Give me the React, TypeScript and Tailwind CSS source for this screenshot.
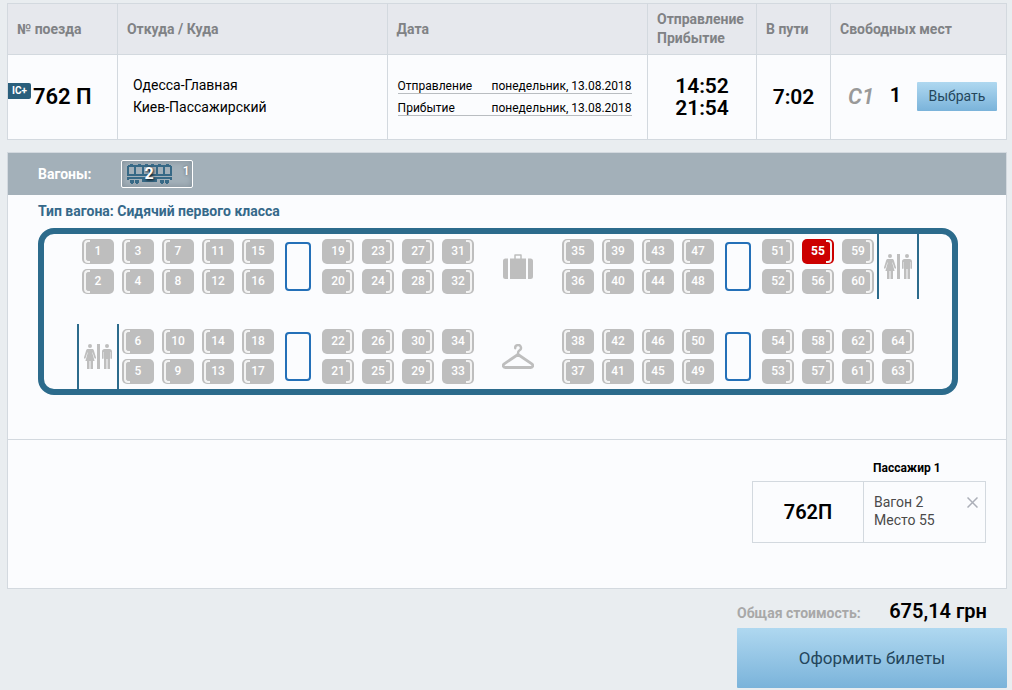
import React, { useState } from "react";
import clsx from "clsx";

type Facing = "left" | "right";

type Column =
  | { kind: "seats"; facing: Facing; seats: [number, number] }
  | { kind: "table" }
  | { kind: "wc" }
  | { kind: "luggage" }
  | { kind: "hanger" };

const seats = (facing: Facing, pairs: [number, number][]): Column[] =>
  pairs.map((pair) => ({ kind: "seats", facing, seats: pair }));

const upperSide: Column[] = [
  ...seats("left", [[1, 2], [3, 4], [7, 8], [11, 12], [15, 16]]),
  { kind: "table" },
  ...seats("right", [[19, 20], [23, 24], [27, 28], [31, 32]]),
  { kind: "luggage" },
  ...seats("left", [[35, 36], [39, 40], [43, 44], [47, 48]]),
  { kind: "table" },
  ...seats("right", [[51, 52], [55, 56], [59, 60]]),
  { kind: "wc" },
];

const lowerSide: Column[] = [
  { kind: "wc" },
  ...seats("left", [[6, 5], [10, 9], [14, 13], [18, 17]]),
  { kind: "table" },
  ...seats("right", [[22, 21], [26, 25], [30, 29], [34, 33]]),
  { kind: "hanger" },
  ...seats("left", [[38, 37], [42, 41], [46, 45], [50, 49]]),
  { kind: "table" },
  ...seats("right", [[54, 53], [58, 57], [62, 61], [64, 63]]),
];

const FREE_SEAT = 55;

function WagonIcon() {
  return (
    <svg width="45" height="20" viewBox="0 0 45 20" fill="#376986" shapeRendering="crispEdges">
      {/* roof vents */}
      <path d="M3 0h3v1H3zM11 0h3v1h-3zM18 0h3v1h-3zM24 0h3v1h-3zM31 0h3v1h-3zM39 0h3v1h-3z" />
      {/* body with windows cut out */}
      <path
        fillRule="evenodd"
        d="M1 1h43v1h1v10H0V2h1zM2 3v7h5V3zM9 3v7h6V3zM17 3v7h5V3zM24 3v7h5V3zM31 3v7h5V3zM38 3v7h5V3z"
      />
      {/* frame and wheels */}
      <path d="M0 13h45v3h-2v-1H30v3H15v-3H2v1H0z" />
      <path d="M3 16h4v3H6v1H4v-1H3zM8 16h4v3h-1v1H9v-1H8zM33 16h4v3h-1v1h-2v-1h-1zM38 16h4v3h-1v1h-2v-1h-1z" />
    </svg>
  );
}

function WcIcon() {
  return (
    <svg width="28" height="25" viewBox="0 0 28 25" fill="#bebebe">
      <circle cx="6" cy="2" r="2" />
      <path d="M4 5h4c1 0 1.500.4 1.800 1.200L12 13.500c.2 1.200-1.200 1.600-1.600.5L8.600 8.500H8.200L10.600 17H9v8H6.500v-8h-1v8H3v-8H1.400l2.400-8.500h-.4L1.600 14c-.4 1.100-1.800.7-1.600-.5l2.200-7.300C2.500 5.400 3 5 4 5z" />
      <path d="M13 0h3v25h-3z" />
      <circle cx="23" cy="2" r="2" />
      <path d="M20.500 5h5C27 5 28 6 28 7.500V14c0 1.200-1.600 1.200-1.600 0V8H26v17h-2.500V15h-1v10H20V8h-.4v6c0 1.200-1.600 1.200-1.600 0V7.500C18 6 19 5 20.500 5z" />
    </svg>
  );
}

function LuggageIcon() {
  return (
    <svg width="30" height="25" viewBox="0 0 30 25" fill="#bebebe">
      <path d="M12 5V1h6v4" fill="none" stroke="#bebebe" strokeWidth="1.500" strokeLinejoin="round" />
      <path d="M2.500 4.500H5V25H2.500A2.500 2.500 0 0 1 0 22.500V7a2.500 2.500 0 0 1 2.500-2.500zM7 4.500h16V25H7zM25 4.500h2.500A2.500 2.500 0 0 1 30 7v15.500a2.500 2.500 0 0 1-2.500 2.500H25z" />
    </svg>
  );
}

function HangerIcon() {
  return (
    <svg width="32" height="25" viewBox="0 0 32 25" fill="none" stroke="#bebebe" strokeLinecap="round" strokeLinejoin="round">
      <path d="M13.200 4.200A2.900 2.900 0 1 1 17.200 6.600C16.200 7.100 16 7.700 16 9.500" strokeWidth="2.400" />
      <path d="M16 10.500 2.200 19.800C.6 21 1 23.500 3.200 23.500h25.600c2.200 0 2.600-2.500 1-3.700z" strokeWidth="2.800" />
    </svg>
  );
}

function Seat({
  number,
  facing,
  selected,
  onClick,
}: {
  number: number;
  facing: Facing;
  selected: boolean;
  onClick: () => void;
}) {
  return (
    <button
      type="button"
      disabled={number !== FREE_SEAT}
      onClick={onClick}
      className={clsx(
        "relative h-[25px] w-8 rounded-[5px] pb-0.5 text-center text-xs leading-5 text-white",
        selected ? "bg-[#cc0000] font-bold" : "bg-[#bebebe] font-medium"
      )}
    >
      <span
        className={clsx(
          "absolute inset-y-px w-1.5 border-y-2 border-[#f3f3f3]",
          facing === "left" ? "left-0.5 rounded-l-[4px] border-l-2" : "right-0.5 rounded-r-[4px] border-r-2"
        )}
      />
      {number}
    </button>
  );
}

function CarSide({
  columns,
  selectedSeat,
  onToggle,
}: {
  columns: Column[];
  selectedSeat: number | null;
  onToggle: (seat: number) => void;
}) {
  return (
    <div className="flex h-[65px]">
      {columns.map((column, index) => {
        switch (column.kind) {
          case "seats":
            return (
              <div key={index} className="flex w-10 flex-col items-center justify-center gap-[5px]">
                {column.seats.map((number) => (
                  <Seat
                    key={number}
                    number={number}
                    facing={column.facing}
                    selected={number === selectedSeat}
                    onClick={() => onToggle(number)}
                  />
                ))}
              </div>
            );
          case "table":
            return (
              <div key={index} className="flex w-10 items-center justify-center">
                <div className="h-[49px] w-[26px] rounded-[4px] border-2 border-[#2470b8]" />
              </div>
            );
          case "wc":
            return (
              <div
                key={index}
                className="-mx-px flex w-[42px] items-center justify-center border-x-2 border-[#2c6b8c]"
              >
                <WcIcon />
              </div>
            );
          default:
            return (
              <div key={index} className="flex w-20 items-center justify-center">
                {column.kind === "luggage" ? <LuggageIcon /> : <HangerIcon />}
              </div>
            );
        }
      })}
    </div>
  );
}

export default function App() {
  const [selectedSeat, setSelectedSeat] = useState<number | null>(FREE_SEAT);

  const handleToggle = (seat: number) => {
    setSelectedSeat((prev) => (prev === seat ? null : seat));
  };

  return (
    <div className="min-h-screen bg-[#e9edf0] pt-[3px] pr-[5px] pl-[7px] font-[Roboto,sans-serif] text-black">
      <table className="w-full table-fixed border-collapse bg-[#fbfcfe] [&_td]:border [&_td]:border-[#d3d9df] [&_th]:border [&_th]:border-[#d3d9df]">
        <colgroup>
          <col className="w-[11%]" />
          <col className="w-[27%]" />
          <col />
          <col className="w-[109px]" />
          <col className="w-[74px]" />
          <col className="w-[176px]" />
        </colgroup>
        <thead>
          <tr className="h-[51px] bg-[#e6e8ed] text-left text-sm leading-[19px] text-[#808285] [&>th]:px-[9px] [&>th]:font-bold">
            <th>№ поезда</th>
            <th>Откуда / Куда</th>
            <th>Дата</th>
            <th>
              Отправление
              <br />
              Прибытие
            </th>
            <th>В пути</th>
            <th>Свободных мест</th>
          </tr>
        </thead>
        <tbody>
          <tr className="h-[85px]">
            <td>
              <div className="flex items-center gap-0.5">
                <span className="mb-3 h-4 rounded-r-xs bg-[#2a5f7c] px-1 text-[10px] leading-[15px] font-bold text-white">
                  IC+
                </span>
                <span className="text-[22px] leading-6 font-semibold whitespace-nowrap">762 П</span>
              </div>
            </td>
            <td className="px-[15px] pb-0.5 text-sm leading-[22px]">
              Одесса-Главная
              <br />
              Киев-Пассажирский
            </td>
            <td className="px-[10px]">
              <div className="flex w-[234px] flex-col gap-[7px] text-xs leading-[14px]">
                <div className="flex justify-between border-b border-[#b9bdc1]">
                  <span>Отправление</span>
                  <span>понедельник, 13.08.2018</span>
                </div>
                <div className="flex justify-between border-b border-[#b9bdc1]">
                  <span>Прибытие</span>
                  <span>понедельник, 13.08.2018</span>
                </div>
              </div>
            </td>
            <td className="text-center text-[21px] leading-[22px] font-semibold">
              <div>14:52</div>
              <div>21:54</div>
            </td>
            <td className="text-center text-[21px] leading-[22px] font-semibold">7:02</td>
            <td className="pr-[9px] pb-0.5 pl-[17px]">
              <div className="flex items-center justify-between">
                <span className="text-[22px] font-semibold text-[#999999] italic">C1</span>
                <span className="pb-0.5 text-xl font-semibold">1</span>
                <button
                  type="button"
                  className="h-[29px] w-20 rounded-[1px] bg-linear-to-b from-[#afd8f0] to-[#7ab3da] text-sm font-normal text-[#24465c]"
                >
                  Выбрать
                </button>
              </div>
            </td>
          </tr>
        </tbody>
      </table>

      <section className="mt-3 border border-[#d3d9df] bg-[#fbfcfe]">
        <div className="flex h-[42px] items-center gap-[29px] bg-[#a3b0b9] pl-[30px]">
          <span className="text-sm font-bold text-white">Вагоны:</span>
          <button
            type="button"
            className="relative flex h-7 w-[72px] items-center rounded-[2px] border border-white pl-[5px] inset-shadow-[0_0_6px_#7f8c96]"
          >
            <WagonIcon />
            <span className="absolute left-[23px] text-base font-bold text-white [text-shadow:1px_1px_3px_#000]">2</span>
            <span className="absolute top-0.5 right-0.5 text-xs font-medium text-white [text-shadow:0_0_3px_#555]">
              1
            </span>
          </button>
        </div>

        <div className="h-[244px] px-[30px] pt-2">
          <h2 className="text-sm leading-[17px] font-bold text-[#35698a]">Тип вагона: Сидячий первого класса</h2>
          <div className="mt-2 flex w-[920px] flex-col gap-[25px] rounded-[16px] border-[6px] border-[#2c6b8c] pl-[34px]">
            <CarSide columns={upperSide} selectedSeat={selectedSeat} onToggle={handleToggle} />
            <CarSide columns={lowerSide} selectedSeat={selectedSeat} onToggle={handleToggle} />
          </div>
        </div>

        <div className="flex h-[149px] justify-end border-t border-[#d3d9df] pt-5 pr-5">
          <div className="w-[234px]">
            <h3 className="pl-[121px] text-xs leading-4 font-bold">Пассажир 1</h3>
            <div className="mt-[5px] flex h-[62px] border border-[#d3d9df]">
              <div className="flex w-[111px] items-center justify-center border-r border-[#d3d9df] text-xl font-semibold">
                762П
              </div>
              <div className="flex grow justify-between py-[11px] pr-[7px] pl-[10px] text-sm leading-[18px] text-[#4a4a4a]">
                <div>
                  Вагон 2
                  <br />
                  Место 55
                </div>
                <button
                  type="button"
                  aria-label="Удалить"
                  onClick={() => setSelectedSeat(null)}
                  className="mt-1 size-[11px]"
                >
                  <svg width="11" height="11" viewBox="0 0 11 11" stroke="#acafb8" strokeWidth="1.500">
                    <path d="M.5.5l10 10M10.500.5l-10 10" />
                  </svg>
                </button>
              </div>
            </div>
          </div>
        </div>
      </section>

      <div className="ml-auto w-[270px]">
        <div className="flex h-[39px] items-baseline justify-between pt-2 pr-5">
          <span className="text-sm font-bold text-[#a8a8a8]">Общая стоимость:</span>
          <span className="text-xl font-semibold">675,14 грн</span>
        </div>
        <button
          type="button"
          className="h-[60px] w-full rounded-[1px] bg-linear-to-b from-[#afd8f0] to-[#7ab3da] pt-0.5 text-[17px] text-[#24465c]"
        >
          Оформить билеты
        </button>
      </div>
    </div>
  );
}
